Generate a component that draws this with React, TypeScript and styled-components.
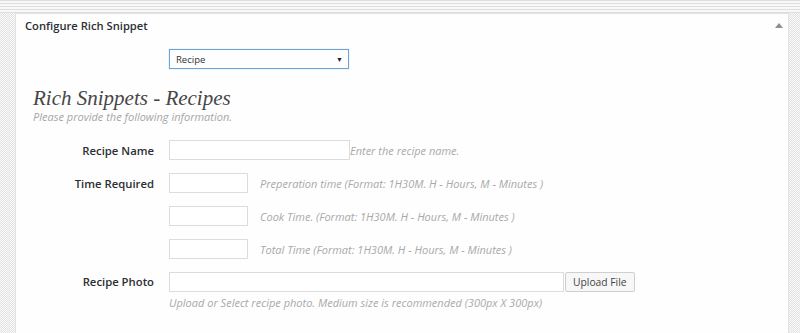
import styled, { createGlobalStyle } from 'styled-components'

const GlobalStyle = createGlobalStyle`
  html, body {
    margin: 0;
    padding: 0;
  }
  body {
    font-family: "Open Sans", "Noto Sans", sans-serif;
    color: #23282d;
    background-color: #eeeeee;
    background-image:
      repeating-linear-gradient(180deg, #dedede 0 1px, #f8f8f8 1px 3px),
      repeating-conic-gradient(#e2e2e2 0 25%, #fafafa 0 50%);
    background-size: 100% 13px, 2px 2px;
    background-repeat: repeat-x, repeat;
  }
`

const Page = styled.div`
  padding: 13px 11px 0 15px;
  height: 333px;
  box-sizing: border-box;
  overflow: hidden;
`

const Panel = styled.section`
  background: #fefefe;
  border: 1px solid #e2e2e2;
  height: 330px;
`

const PanelHeader = styled.header`
  display: flex;
  align-items: center;
  justify-content: space-between;
  height: 23px;
  padding: 0 5px 0 9px;
`

const PanelTitle = styled.h3`
  margin: 0;
  font-size: 11.2px;
  font-weight: 600;
  color: #2b2f33;
`

const Toggle = styled.span`
  width: 0;
  height: 0;
  border-left: 4px solid transparent;
  border-right: 4px solid transparent;
  border-bottom: 5px solid #8a8f99;
`

const Body = styled.div`
  padding-top: 12px;
`

const Grid = styled.div`
  display: grid;
  grid-template-columns: 138px 1fr;
  column-gap: 15px;
  row-gap: 13px;
  align-items: center;
`

const Select = styled.div`
  grid-column: 2;
  display: flex;
  align-items: center;
  justify-content: space-between;
  width: 180px;
  height: 20px;
  box-sizing: border-box;
  border: 1px solid #6aa3d8;
  box-shadow: 0 0 1px #a9c9ea;
  padding: 0 5px 0 6px;
  font-size: 9.5px;
  color: #333;
`

const Caret = styled.span`
  font-size: 7px;
  color: #222;
`

const Intro = styled.div`
  padding: 17px 0 0 17px;
  margin-bottom: 16px;
`

const Heading = styled.h2`
  margin: 0;
  font-family: "Liberation Serif", "DejaVu Serif", serif;
  font-style: italic;
  font-weight: 400;
  font-size: 21px;
  color: #464646;
  line-height: 24px;
`

const Note = styled.p`
  margin: 0;
  font-style: italic;
  font-size: 11px;
  color: #a6a6a6;
  line-height: 14px;
`

const Label = styled.label`
  grid-column: 1;
  text-align: right;
  font-size: 11.3px;
  font-weight: 600;
  color: #2b2f33;
`

const Field = styled.div`
  grid-column: 2;
  display: flex;
  align-items: center;
`

const Input = styled.div<{ $width: number }>`
  width: ${p => p.$width}px;
  height: 20px;
  box-sizing: border-box;
  border: 1px solid #dcdcdc;
  background: #fff;
  flex: none;
`

const Hint = styled.span<{ $gap?: number }>`
  margin-left: ${p => p.$gap ?? 0}px;
  font-style: italic;
  font-size: 11px;
  color: #a9a9a9;
  white-space: nowrap;
`

const UploadButton = styled.button`
  height: 20px;
  margin-left: 1px;
  padding: 0 7px;
  font-family: inherit;
  font-size: 10.3px;
  color: #444;
  background: #f7f7f7;
  border: 1px solid #cfcfcf;
  border-radius: 2px;
`

const Stack = styled.div`
  grid-column: 2;
  display: flex;
  flex-direction: column;
  gap: 3px;
`

const PhotoRow = styled.div`
  display: flex;
  align-items: center;
`

const PhotoLabel = styled(Label)`
  align-self: start;
  line-height: 20px;
`

export default function App() {
  return (
    <>
      <GlobalStyle />
      <Page>
        <Panel>
          <PanelHeader>
            <PanelTitle>Configure Rich Snippet</PanelTitle>
            <Toggle />
          </PanelHeader>
          <Body>
            <Grid>
              <Select>
                <span>Recipe</span>
                <Caret>▼</Caret>
              </Select>
            </Grid>
            <Intro>
              <Heading>Rich Snippets - Recipes</Heading>
              <Note>Please provide the following information.</Note>
            </Intro>
            <Grid>
              <Label>Recipe Name</Label>
              <Field>
                <Input $width={181} />
                <Hint>Enter the recipe name.</Hint>
              </Field>

              <Label>Time Required</Label>
              <Field>
                <Input $width={79} />
                <Hint $gap={12}>Preperation time (Format: 1H30M. H - Hours, M - Minutes )</Hint>
              </Field>

              <Field>
                <Input $width={79} />
                <Hint $gap={12}>Cook Time. (Format: 1H30M. H - Hours, M - Minutes )</Hint>
              </Field>

              <Field>
                <Input $width={79} />
                <Hint $gap={12}>Total Time (Format: 1H30M. H - Hours, M - Minutes )</Hint>
              </Field>

              <PhotoLabel>Recipe Photo</PhotoLabel>
              <Stack>
                <PhotoRow>
                  <Input $width={395} />
                  <UploadButton>Upload File</UploadButton>
                </PhotoRow>
                <Hint>Upload or Select recipe photo. Medium size is recommended (300px X 300px)</Hint>
              </Stack>
            </Grid>
          </Body>
        </Panel>
      </Page>
    </>
  )
}
